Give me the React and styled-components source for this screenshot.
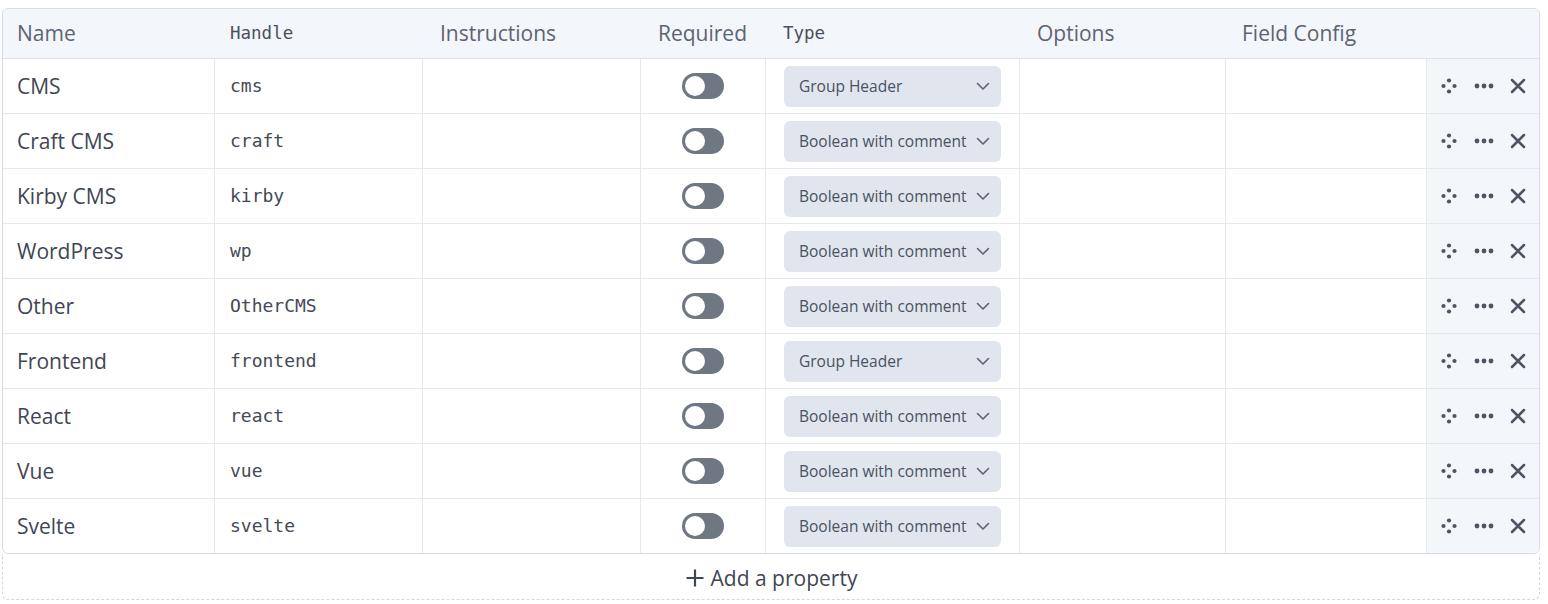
import React from "react";
import styled, { createGlobalStyle } from "styled-components";

const Global = createGlobalStyle`
  html, body { margin: 0; padding: 0; background: #ffffff; }
  body { font-family: "Open Sans", "Noto Sans", sans-serif; }
`;

const Page = styled.div`
  padding: 8px 8px 0 2px;
`;

const COLS = "211px 208px 218px 125px 254px 206px 201px 1fr";

const Table = styled.div`
  border: 1px solid #d7dce4;
  border-radius: 6px;
  overflow: hidden;
`;

const HeadRow = styled.div`
  display: grid;
  grid-template-columns: ${COLS};
  height: 49px;
  background: #f3f6fa;
  border-bottom: 1px solid #dde2e9;
`;

const HeadCell = styled.div`
  display: flex;
  align-items: center;
  justify-content: ${(p) => (p.$center ? "center" : "flex-start")};
  padding-left: ${(p) => (p.$center ? "0" : `${p.$pl ?? 16}px`)};
  padding-bottom: 1px;
  font-family: ${(p) =>
    p.$mono ? `"DejaVu Sans Mono", monospace` : `"Open Sans", sans-serif`};
  font-size: ${(p) => (p.$mono ? "17.5px" : "21px")};
  color: ${(p) => (p.$mono ? "#4a505c" : "#5d6471")};
  font-weight: 400;
  white-space: nowrap;
`;

const Row = styled.div`
  display: grid;
  grid-template-columns: ${COLS};
  height: 54px;
  border-top: ${(p) => (p.$first ? "none" : "1px solid #e5e8ed")};
`;

const Cell = styled.div`
  display: flex;
  align-items: center;
  justify-content: ${(p) => (p.$center ? "center" : "flex-start")};
  padding-left: ${(p) => (p.$center ? 0 : `${p.$pl ?? 16}px`)};
  border-left: ${(p) => (p.$first ? "none" : "1px solid #e5e8ed")};
  background: ${(p) => (p.$shade ? "#f3f6fa" : "transparent")};
  box-sizing: border-box;
  min-width: 0;
`;

const NameText = styled.span`
  font-family: "Open Sans", sans-serif;
  font-size: 21px;
  color: #3f4654;
`;

const HandleText = styled.span`
  font-family: "DejaVu Sans Mono", monospace;
  font-size: 18px;
  color: #444a56;
  margin-top: -2px;
`;

const Toggle = styled.div`
  width: 42px;
  height: 26px;
  border-radius: 13px;
  background: #6f7783;
  position: relative;
  box-sizing: border-box;
  &::after {
    content: "";
    position: absolute;
    left: 3px;
    top: 3px;
    width: 20px;
    height: 20px;
    border-radius: 50%;
    background: #ffffff;
  }
`;

const Select = styled.div`
  width: 217px;
  height: 41px;
  border-radius: 6px;
  background: #e1e6ee;
  display: flex;
  align-items: center;
  justify-content: space-between;
  padding: 0 10px 0 15px;
  box-sizing: border-box;
  font-family: "Open Sans", sans-serif;
  font-size: 15.5px;
  color: #4a5160;
  white-space: nowrap;
`;

const Actions = styled.div`
  display: flex;
  align-items: center;
  width: 100%;
  padding-left: 5px;
  color: #4d5563;
`;

const IconBtn = styled.span`
  display: inline-flex;
  align-items: center;
  justify-content: center;
  width: ${(p) => p.$w}px;
  height: 24px;
`;

const AddRow = styled.div`
  height: 46px;
  padding-top: 3px;
  box-sizing: border-box;
  border: 1px dashed #d3d7de;
  border-top: none;
  border-radius: 0 0 6px 6px;
  display: flex;
  align-items: center;
  justify-content: center;
  gap: 6px;
  font-family: "Open Sans", sans-serif;
  font-size: 21px;
  color: #3f4654;
`;

const Chevron = () => (
  <svg width="16" height="16" viewBox="0 0 16 16" fill="none">
    <path d="M2.5 5.5l5.5 5.5 5.5-5.5" stroke="#5b6270" strokeWidth="1.6" strokeLinecap="round" strokeLinejoin="round" />
  </svg>
);

const MoveIcon = () => (
  <svg width="16" height="16" viewBox="0 0 16 16" fill="#4d5563">
    <circle cx="8" cy="2.5" r="2.1" />
    <circle cx="2.5" cy="8" r="2.1" />
    <circle cx="13.5" cy="8" r="2.1" />
    <circle cx="8" cy="13.5" r="2.1" />
  </svg>
);

const DotsIcon = () => (
  <svg width="20" height="8" viewBox="0 0 20 8" fill="#4d5563">
    <circle cx="3" cy="4" r="2.4" />
    <circle cx="10" cy="4" r="2.4" />
    <circle cx="17" cy="4" r="2.4" />
  </svg>
);

const CloseIcon = () => (
  <svg width="16" height="16" viewBox="0 0 16 16" fill="none">
    <path d="M2 2l12 12M14 2L2 14" stroke="#4d5563" strokeWidth="2.5" strokeLinecap="round" />
  </svg>
);

const PlusIcon = () => (
  <svg width="20" height="20" viewBox="0 0 20 20" fill="none">
    <path d="M10 1.5v17M1.5 10h17" stroke="#3f4654" strokeWidth="2.2" />
  </svg>
);

const rows = [
  ["CMS", "cms", "Group Header"],
  ["Craft CMS", "craft", "Boolean with comment"],
  ["Kirby CMS", "kirby", "Boolean with comment"],
  ["WordPress", "wp", "Boolean with comment"],
  ["Other", "OtherCMS", "Boolean with comment"],
  ["Frontend", "frontend", "Group Header"],
  ["React", "react", "Boolean with comment"],
  ["Vue", "vue", "Boolean with comment"],
  ["Svelte", "svelte", "Boolean with comment"],
];

export default function App() {
  return (
    <>
      <Global />
      <Page>
        <Table>
          <HeadRow>
            <HeadCell $pl={14}>Name</HeadCell>
            <HeadCell $mono $pl={16}>Handle</HeadCell>
            <HeadCell $pl={18}>Instructions</HeadCell>
            <HeadCell $center>Required</HeadCell>
            <HeadCell $mono $pl={18}>Type</HeadCell>
            <HeadCell $pl={18}>Options</HeadCell>
            <HeadCell $pl={17}>Field Config</HeadCell>
            <HeadCell />
          </HeadRow>
          {rows.map(([name, handle, type], i) => (
            <Row key={handle} $first={i === 0}>
              <Cell $first $pl={14}>
                <NameText>{name}</NameText>
              </Cell>
              <Cell $pl={15}>
                <HandleText>{handle}</HandleText>
              </Cell>
              <Cell />
              <Cell $center>
                <Toggle />
              </Cell>
              <Cell $pl={18}>
                <Select>
                  <span>{type}</span>
                  <Chevron />
                </Select>
              </Cell>
              <Cell />
              <Cell />
              <Cell $shade $pl={0}>
                <Actions>
                  <IconBtn $w={34}>
                    <MoveIcon />
                  </IconBtn>
                  <IconBtn $w={35}>
                    <DotsIcon />
                  </IconBtn>
                  <IconBtn $w={33}>
                    <CloseIcon />
                  </IconBtn>
                </Actions>
              </Cell>
            </Row>
          ))}
        </Table>
        <AddRow>
          <PlusIcon />
          <span>Add a property</span>
        </AddRow>
      </Page>
    </>
  );
}
